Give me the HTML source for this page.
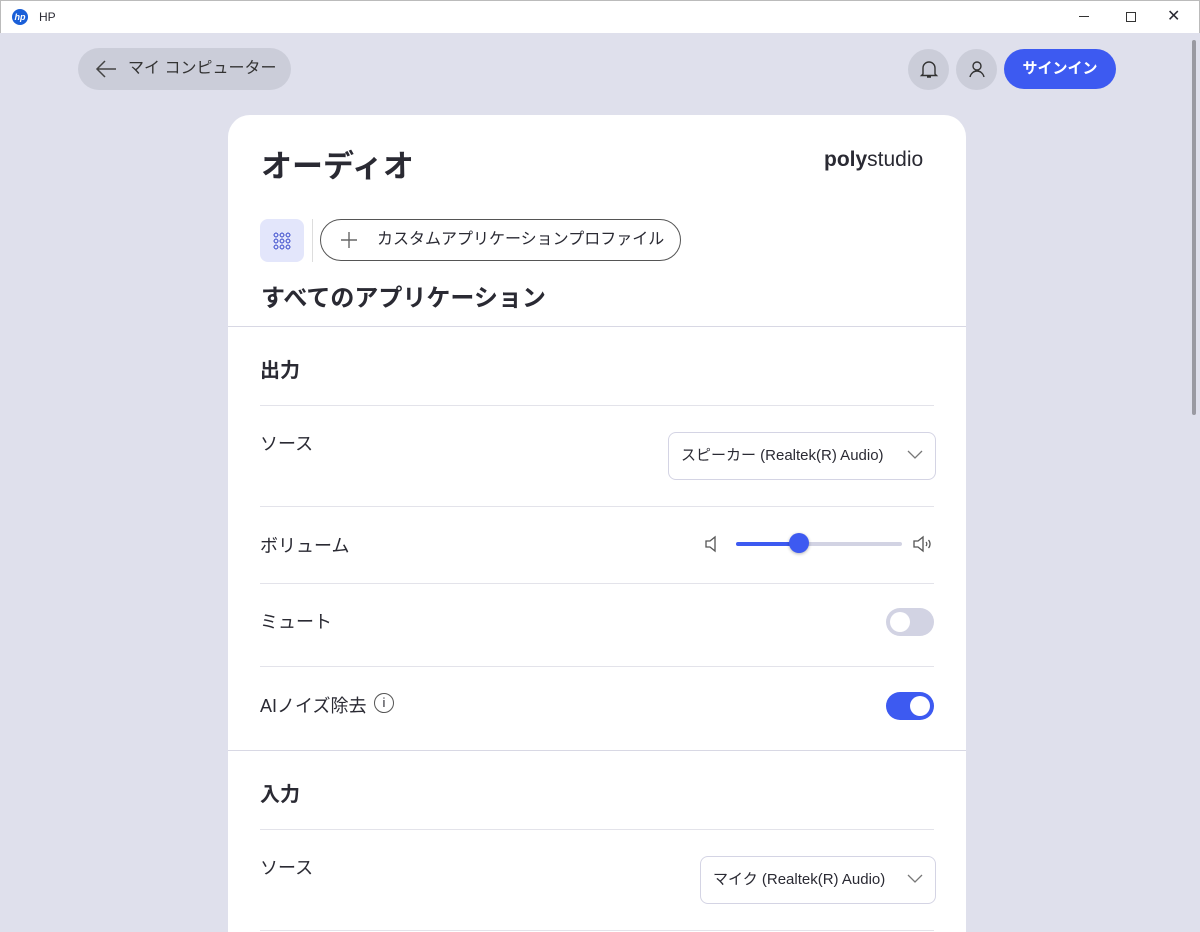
<!DOCTYPE html>
<html><head><meta charset="utf-8"><style>
*{box-sizing:border-box;margin:0;padding:0}
html,body{width:1200px;height:932px;overflow:hidden}
body{background:#dfe0ec;font-family:"Liberation Sans","Noto Sans CJK JP",sans-serif;color:#2a2a33;position:relative}
.tb{position:absolute;left:0;top:0;width:1200px;height:33px;background:#fff;border:1px solid #bbb;border-bottom:none}
.abs{position:absolute}
.card{position:absolute;left:228px;top:115px;width:738px;height:860px;background:#fff;border-radius:22px}
.hr{position:absolute;height:1px;background:#e3e3ea}
.lbl{position:absolute;font-size:18px}
.sel{position:absolute;height:48px;border:1px solid #d4d4e4;border-radius:8px;font-size:15px;padding:0 12px;line-height:46px;color:#2a2a33}
.chev{position:absolute;right:12px;top:17px}
</style></head><body>
<div class="tb">
 <div class="abs" style="left:11px;top:8px;width:16px;height:16px;border-radius:50%;background:#1a5fd8;color:#fff;font-size:9px;font-style:italic;font-weight:bold;text-align:center;line-height:16px">hp</div>
 <div class="abs" style="left:38px;top:9px;font-size:12px">HP</div>
 <div class="abs" style="left:1078px;top:15px;width:10px;height:1px;background:#333"></div>
 <div class="abs" style="left:1125px;top:11px;width:10px;height:10px;border:1px solid #333"></div>
 <div class="abs" style="left:1166px;top:5px;font-size:16px">✕</div>
</div>
<div class="abs" style="left:1192px;top:40px;width:4px;height:375px;background:#9a9aa2;border-radius:2px"></div>
<div class="abs" style="left:78px;top:48px;width:213px;height:42px;border-radius:21px;background:#cbcdd9;font-size:16px;line-height:42px;padding-left:50px;color:#333">マイ コンピューター</div>
<svg class="abs" style="left:95px;top:59px" width="22" height="20" viewBox="0 0 22 20" fill="none" stroke="#444" stroke-width="1.5"><path d="M21 10H2 M10 2L2 10l8 8"/></svg>
<div class="abs" style="left:908px;top:49px;width:41px;height:41px;border-radius:50%;background:#cbcdd9"></div>
<svg class="abs" style="left:918px;top:58px" width="22" height="22" viewBox="0 0 22 22" fill="none" stroke="#333" stroke-width="1.4"><path d="M5 16V10a6 6 0 0 1 12 0v6l1.5 1.5h-15z M9 19h4"/></svg>
<div class="abs" style="left:956px;top:49px;width:41px;height:41px;border-radius:50%;background:#cbcdd9"></div>
<svg class="abs" style="left:966px;top:58px" width="22" height="22" viewBox="0 0 22 22" fill="none" stroke="#333" stroke-width="1.4"><circle cx="11" cy="8" r="4"/><path d="M4 19c1-4 4-6 7-6s6 2 7 6"/></svg>
<div class="abs" style="left:1004px;top:49px;width:112px;height:40px;border-radius:20px;background:#3d5af1;color:#fff;font-size:15px;text-align:center;line-height:40px;font-weight:bold">サインイン</div>
<div class="card">
 <div class="abs" style="left:33px;top:26px;font-size:31px;font-weight:bold">オーディオ</div>
 <div class="abs" style="left:596px;top:33px;font-size:21px"><b>poly</b>studio</div>
 <div class="abs" style="left:32px;top:104px;width:44px;height:43px;border-radius:8px;background:#e3e6fb"></div>
 <div class="abs" style="left:45px;top:117px;width:18px;height:18px;background:radial-gradient(circle,transparent 1.2px,#4a5ad0 1.5px,#4a5ad0 2.3px,transparent 2.5px) 0 0/6px 6px"></div>
 <div class="abs" style="left:84px;top:104px;width:1px;height:43px;background:#ddd"></div>
 <div class="abs" style="left:92px;top:104px;width:361px;height:42px;border:1.5px solid #555;border-radius:21px;font-size:16px;line-height:39px;padding-left:56px">カスタムアプリケーションプロファイル</div>
 <svg class="abs" style="left:112px;top:116px" width="18" height="18" viewBox="0 0 18 18" stroke="#666" stroke-width="1.4"><path d="M9 1v16 M1 9h16"/></svg>
 <div class="abs" style="left:33px;top:163px;font-size:24px;font-weight:bold">すべてのアプリケーション</div>
 <div class="hr" style="left:0;top:211px;width:738px;background:#d8d8e4"></div>
 <div class="lbl" style="left:32px;top:239px;font-size:20px;font-weight:bold">出力</div>
 <div class="hr" style="left:32px;top:290px;width:674px"></div>
 <div class="lbl" style="left:32px;top:315px">ソース</div>
 <div class="sel" style="left:440px;top:317px;width:268px">スピーカー (Realtek(R) Audio)<svg class="chev" width="16" height="10" viewBox="0 0 16 10" fill="none" stroke="#777" stroke-width="1.3"><path d="M1 1l7 7 7-7"/></svg></div>
 <div class="hr" style="left:32px;top:391px;width:674px"></div>
 <div class="lbl" style="left:32px;top:417px">ボリューム</div>
 <svg class="abs" style="left:476px;top:420px" width="16" height="18" viewBox="0 0 16 18" fill="none" stroke="#555" stroke-width="1.3"><path d="M2 6h4l5-4v14l-5-4H2z"/></svg>
 <div class="abs" style="left:508px;top:427px;width:64px;height:4px;background:#3d5af1;border-radius:2px"></div>
 <div class="abs" style="left:572px;top:427px;width:102px;height:4px;background:#d2d3e3;border-radius:2px"></div>
 <div class="abs" style="left:561px;top:418px;width:20px;height:20px;border-radius:50%;background:#3d5af1;box-shadow:0 1px 3px rgba(0,0,0,.3)"></div>
 <svg class="abs" style="left:684px;top:420px" width="24" height="18" viewBox="0 0 24 18" fill="none" stroke="#555" stroke-width="1.3"><path d="M2 6h4l5-4v14l-5-4H2z M14 7a3 3 0 0 1 0 4 M16.5 5a6 6 0 0 1 0 8"/></svg>
 <div class="hr" style="left:32px;top:468px;width:674px"></div>
 <div class="lbl" style="left:32px;top:493px">ミュート</div>
 <div class="abs" style="left:658px;top:493px;width:48px;height:28px;border-radius:14px;background:#d2d3e3"></div>
 <div class="abs" style="left:662px;top:497px;width:20px;height:20px;border-radius:50%;background:#fff"></div>
 <div class="hr" style="left:32px;top:551px;width:674px"></div>
 <div class="lbl" style="left:32px;top:577px">AIノイズ除去</div>
 <div class="abs" style="left:146px;top:578px;width:20px;height:20px;border:1.3px solid #555;border-radius:50%;font-size:13px;text-align:center;line-height:18px">i</div>
 <div class="abs" style="left:658px;top:577px;width:48px;height:28px;border-radius:14px;background:#3d5af1"></div>
 <div class="abs" style="left:682px;top:581px;width:20px;height:20px;border-radius:50%;background:#fff"></div>
 <div class="hr" style="left:0;top:635px;width:738px;background:#d8d8e4"></div>
 <div class="lbl" style="left:32px;top:663px;font-size:20px;font-weight:bold">入力</div>
 <div class="hr" style="left:32px;top:714px;width:674px"></div>
 <div class="lbl" style="left:32px;top:739px">ソース</div>
 <div class="sel" style="left:472px;top:741px;width:236px">マイク (Realtek(R) Audio)<svg class="chev" width="16" height="10" viewBox="0 0 16 10" fill="none" stroke="#777" stroke-width="1.3"><path d="M1 1l7 7 7-7"/></svg></div>
 <div class="hr" style="left:32px;top:815px;width:674px"></div>
</div>
</body></html>
